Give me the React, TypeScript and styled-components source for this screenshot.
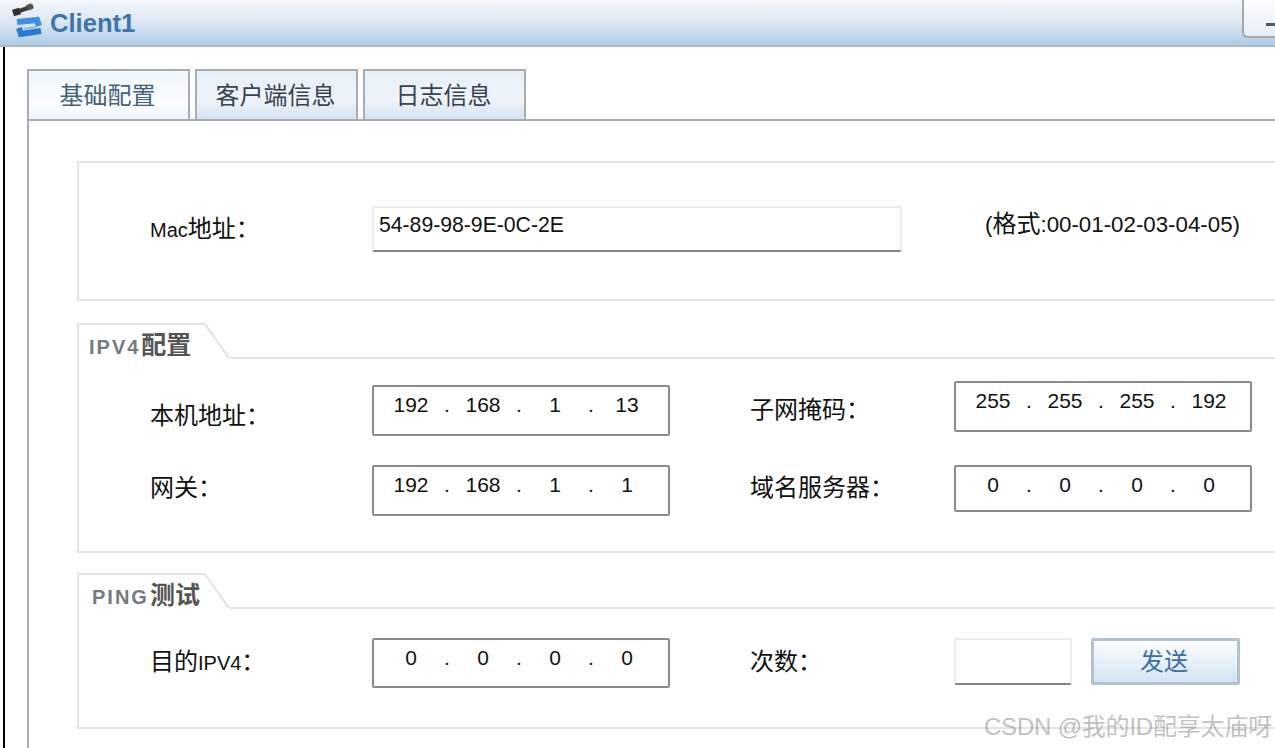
import { ReactElement } from 'react';
import styled, { createGlobalStyle } from 'styled-components';

const GlobalStyle = createGlobalStyle`
  html, body {
    margin: 0;
    padding: 0;
    background: #fff;
  }
  * {
    box-sizing: border-box;
  }
`;

const CJK = `'Liberation Sans', 'Noto Sans CJK SC', sans-serif`;

const TABS = ['基础配置', '客户端信息', '日志信息'];

function ClientIcon(): ReactElement {
  return (
    <IconBox>
      <svg width='32' height='38' viewBox='0 0 32 38'>
        <path d='M2 10 L21 3' stroke='#3a3a3a' strokeWidth='4' fill='none' />
        <path d='M1 10 L8 8' stroke='#333' strokeWidth='7' fill='none' />
        <path d='M15 5 L20 3' stroke='#555' strokeWidth='6' fill='none' />
        <path d='M5 19 L25 17 L27 23' stroke='#3f8fe2' strokeWidth='6' fill='none' />
        <path d='M7 25 L9 31 L29 28' stroke='#2a78cf' strokeWidth='6' fill='none' />
        <path d='M12 26 L24 24' stroke='#8fbdec' strokeWidth='2' fill='none' />
      </svg>
    </IconBox>
  );
}

function IpField({ parts }: { parts: string[] }): ReactElement {
  return (
    <IpBox>
      {parts.map((part, i) => (
        <IpPart key={i}>
          <Octet>{part}</Octet>
          {i < parts.length - 1 && <Dot>.</Dot>}
        </IpPart>
      ))}
    </IpBox>
  );
}

function GroupHeader({ indent, latin, cjk }: { indent: number; latin: string; cjk: string }): ReactElement {
  return (
    <GroupHead>
      <Legend $indent={indent}>
        <LegendLatin>{latin}</LegendLatin>
        {cjk}
      </Legend>
      <Notch width='25' height='36' viewBox='0 0 25 36'>
        <path d='M0 1 L24 35' stroke='#e3e3e3' strokeWidth='2' fill='none' />
      </Notch>
      <HeadRule />
    </GroupHead>
  );
}

export default function App(): ReactElement {
  return (
    <Page>
      <GlobalStyle />
      <TitleBar>
        <ClientIcon />
        <TitleText>Client1</TitleText>
        <MinButton>
          <MinDash />
        </MinButton>
      </TitleBar>
      <Body>
        <WindowEdge />
        <Main>
          <TabRow>
            {TABS.map((tab, i) => (
              <Tab key={tab} $active={i === 0}>
                {tab}
              </Tab>
            ))}
          </TabRow>
          <Panel>
            <MacBox>
              <Row>
                <Label $width={222} $top={8}>
                  <Latin>Mac</Latin>地址：
                </Label>
                <TextInput $width={530} $height={46}>54-89-98-9E-0C-2E</TextInput>
                <Hint>
                  (<HintCjk>格式</HintCjk>:00-01-02-03-04-05)
                </Hint>
              </Row>
            </MacBox>

            <Group>
              <GroupHeader indent={10} latin='IPV4' cjk='配置' />
              <GroupRows $top={22} $bottom={35} $gap={29}>
                <Row>
                  <Pair $width={600}>
                    <Label $width={222} $top={20}>本机地址：</Label>
                    <FieldSlot $top={4} $height={51}>
                      <IpField parts={['192', '168', '1', '13']} />
                    </FieldSlot>
                  </Pair>
                  <Pair $width={502}>
                    <Label $width={204} $top={14}>子网掩码：</Label>
                    <FieldSlot $top={0} $height={51}>
                      <IpField parts={['255', '255', '255', '192']} />
                    </FieldSlot>
                  </Pair>
                </Row>
                <Row>
                  <Pair $width={600}>
                    <Label $width={222} $top={8}>网关：</Label>
                    <FieldSlot $top={0} $height={51}>
                      <IpField parts={['192', '168', '1', '1']} />
                    </FieldSlot>
                  </Pair>
                  <Pair $width={502}>
                    <Label $width={204} $top={8}>域名服务器：</Label>
                    <FieldSlot $top={0} $height={47}>
                      <IpField parts={['0', '0', '0', '0']} />
                    </FieldSlot>
                  </Pair>
                </Row>
              </GroupRows>
            </Group>

            <Group>
              <GroupHeader indent={13} latin='PING' cjk='测试' />
              <GroupRows $top={29} $bottom={39} $gap={0}>
                <Row>
                  <Pair $width={600}>
                    <Label $width={222} $top={9}>
                      目的<Latin>IPV4</Latin>：
                    </Label>
                    <FieldSlot $top={0} $height={50}>
                      <IpField parts={['0', '0', '0', '0']} />
                    </FieldSlot>
                  </Pair>
                  <Pair $width={502}>
                    <Label $width={204} $top={9}>次数：</Label>
                    <TextInput $width={118} $height={47} />
                    <SendButton>发送</SendButton>
                  </Pair>
                </Row>
              </GroupRows>
            </Group>
          </Panel>
        </Main>
      </Body>
      <Watermark>CSDN @我的ID配享太庙呀</Watermark>
    </Page>
  );
}

const Page = styled.div`
  position: relative;
  width: 1275px;
  height: 748px;
  overflow: hidden;
  display: flex;
  flex-direction: column;
  background: #fff;
  font-family: ${CJK};
`;

const TitleBar = styled.div`
  height: 47px;
  flex: none;
  display: flex;
  align-items: flex-start;
  padding-left: 12px;
  background: linear-gradient(#f4f7fd 0%, #dfe9f4 45%, #aecce5 100%);
  border-bottom: 2px solid #a9bbcb;
`;

const IconBox = styled.div`
  width: 38px;
  height: 40px;
  padding-top: 3px;
  flex: none;
`;

const TitleText = styled.div`
  font-size: 25.6px;
  font-weight: 700;
  line-height: 47px;
  color: #3f74ad;
`;

const MinButton = styled.div`
  margin-left: auto;
  width: 60px;
  height: 38px;
  flex: none;
  margin-right: -27px;
  background: linear-gradient(#fbfcfe, #e6eef7);
  border-left: 2px solid #a8a8a8;
  border-bottom: 2px solid #a8a8a8;
  border-bottom-left-radius: 6px;
  padding: 23px 0 0 22px;
`;

const MinDash = styled.div`
  width: 20px;
  height: 3px;
  background: #55565f;
`;

const Body = styled.div`
  flex: 1;
  display: flex;
  padding-left: 3px;
  min-height: 0;
`;

const WindowEdge = styled.div`
  width: 2px;
  flex: none;
  background: #000;
`;

const Main = styled.div`
  flex: 1;
  padding: 22px 0 0 22px;
  display: flex;
  flex-direction: column;
`;

const TabRow = styled.div`
  display: flex;
  gap: 5px;
  flex: none;
`;

const Tab = styled.div<{ $active: boolean }>`
  width: 163px;
  height: 50px;
  padding: 0 2px 4px 0;
  display: flex;
  align-items: center;
  justify-content: center;
  font-size: 24px;
  color: ${(props) => (props.$active ? '#46617c' : '#3c4350')};
  border: 2px solid #a9adb1;
  border-bottom: none;
  background: ${(props) =>
    props.$active
      ? 'linear-gradient(#eef6fc, #fbfdff 70%, #eef5fb)'
      : 'linear-gradient(#e6eff8, #eef4fa 60%, #d4e3f1)'};
`;

const Panel = styled.div`
  width: 1400px;
  flex: 1;
  border-top: 2px solid #a9adb1;
  border-left: 2px solid #a9adb1;
  padding: 40px 0 0 48px;
  display: flex;
  flex-direction: column;
`;

const MacBox = styled.div`
  height: 140px;
  flex: none;
  border: 2px solid #e3e3e3;
  padding-top: 43px;
  margin-bottom: 22px;
`;

const Group = styled.div`
  flex: none;
  margin-bottom: 20px;
  border-left: 2px solid #e3e3e3;
  border-bottom: 2px solid #e3e3e3;
`;

const GroupHead = styled.div`
  display: flex;
  height: 36px;
`;

const Legend = styled.div<{ $indent: number }>`
  width: 126px;
  height: 36px;
  flex: none;
  border-top: 2px solid #e3e3e3;
  padding-left: ${(props) => props.$indent}px;
  font-size: 25px;
  font-weight: 700;
  line-height: 40px;
  color: #555;
  white-space: nowrap;
`;

const LegendLatin = styled.span`
  font-size: 20px;
  letter-spacing: 2px;
  margin-right: 1px;
  color: #747a80;
`;

const Notch = styled.svg`
  flex: none;
  display: block;
`;

const HeadRule = styled.div`
  flex: 1;
  border-bottom: 2px solid #e3e3e3;
`;

const GroupRows = styled.div<{ $top: number; $bottom: number; $gap: number }>`
  display: flex;
  flex-direction: column;
  gap: ${(props) => props.$gap}px;
  padding-top: ${(props) => props.$top}px;
  padding-bottom: ${(props) => props.$bottom}px;
`;

const Row = styled.div`
  display: flex;
  align-items: flex-start;
  padding-left: 71px;
`;

const Pair = styled.div<{ $width: number }>`
  width: ${(props) => props.$width}px;
  flex: none;
  display: flex;
  align-items: flex-start;
`;

const Label = styled.div<{ $width: number; $top: number }>`
  width: ${(props) => props.$width}px;
  margin-top: ${(props) => props.$top}px;
  flex: none;
  font-size: 24px;
  line-height: 30px;
  color: #111;
  white-space: nowrap;
`;

const Latin = styled.span`
  font-size: 20px;
`;

const TextInput = styled.div<{ $width: number; $height: number }>`
  width: ${(props) => props.$width}px;
  height: ${(props) => props.$height}px;
  flex: none;
  padding: 4px 0 0 5px;
  border: 2px solid #ececec;
  border-bottom-color: #858585;
  border-radius: 2px;
  font-size: 21.2px;
  line-height: 26px;
  color: #111;
`;

const Hint = styled.div`
  margin-left: 83px;
  margin-top: 3px;
  font-size: 22.3px;
  line-height: 30px;
  color: #111;
  white-space: nowrap;
`;

const HintCjk = styled.span`
  font-size: 24px;
`;

const FieldSlot = styled.div<{ $top: number; $height: number }>`
  width: 298px;
  height: ${(props) => props.$height}px;
  margin-top: ${(props) => props.$top}px;
  flex: none;
`;

const IpBox = styled.div`
  height: 100%;
  display: flex;
  padding: 6px 0 0 9px;
  border: 2px solid #8c8c8c;
  border-radius: 2px;
  font-size: 21px;
  line-height: 24px;
  color: #111;
`;

const IpPart = styled.div`
  display: flex;
`;

const Octet = styled.span`
  width: 56px;
  text-align: center;
`;

const Dot = styled.span`
  width: 16px;
  text-align: center;
`;

const SendButton = styled.div`
  width: 149px;
  height: 47px;
  margin-left: 19px;
  padding: 0 3px 4px 0;
  flex: none;
  display: flex;
  align-items: center;
  justify-content: center;
  border: 3px solid #b3c1d0;
  border-radius: 2px;
  background: linear-gradient(#fdfeff, #d2e3f2);
  font-size: 24px;
  color: #3a6ea8;
`;

const Watermark = styled.div`
  position: absolute;
  right: 3px;
  top: 710px;
  font-size: 24px;
  line-height: 34px;
  letter-spacing: -0.2px;
  color: rgba(140, 140, 140, 0.55);
  white-space: nowrap;
`;
